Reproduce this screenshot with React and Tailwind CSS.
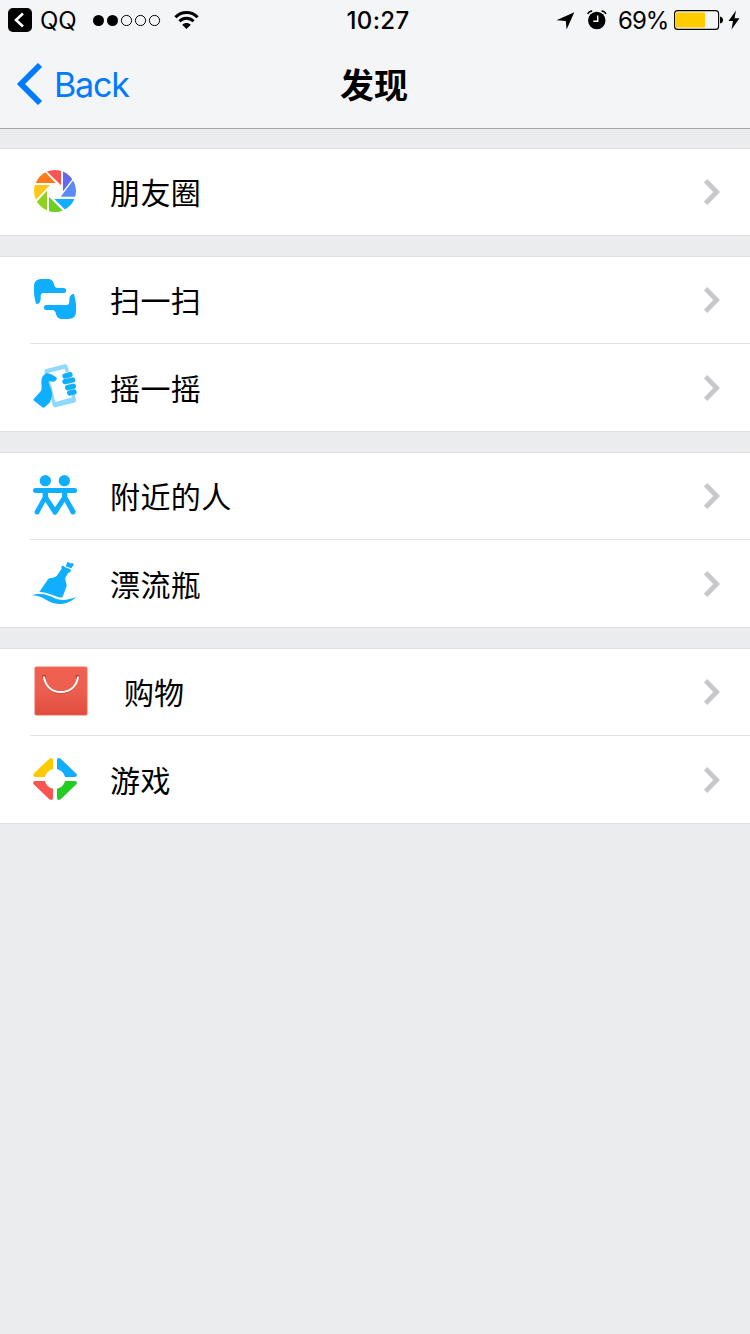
import React from 'react';

const MomentsIcon = () => (
  <svg viewBox="0 0 210 192" className="w-[70px] h-16">
    <defs>
      <clipPath id="aperture">
        <circle cx="105" cy="93" r="63" />
      </clipPath>
    </defs>
    <g clipPath="url(#aperture)">
      <path d="M30 69 L76 26 L76 37 L107 69 Z" fill="#ff7a1a" />
      <path d="M74 28 L123 28 L123 76 Z" fill="#fa5452" />
      <path d="M129 26 L166 46 L129 94 Z" fill="#6467f0" />
      <path d="M162 58 L175 110 L122 110 Z" fill="#5b8af5" />
      <path d="M103 117 L180 117 L136 150 Z" fill="#10aeff" />
      <path d="M87 110 L136 160 L87 160 Z" fill="#6cd020" />
      <path d="M81 92 L81 155 L60 150 L46 130 Z" fill="#8fd320" />
      <path d="M35 75 L90 75 L45 122 L35 120 Z" fill="#ffc71a" />
    </g>
  </svg>
);

const ScanIcon = () => (
  <svg viewBox="0 0 210 192" className="w-[70px] h-16" fill="#10aeff">
    <path
      id="hand"
      d="M42 56 C42 40 50 33 66 33 H82 C94 33 100 39 102 48 C104 57 107 60 114 60 H131 A7.5 7.5 0 0 1 131 75 H70 C64 75 62 79 62 86 V93 C62 102 57 108 48 108 C45 94 42 84 42 72 Z"
    />
    <use href="#hand" transform="rotate(180 105 93)" />
  </svg>
);

const ShakeIcon = () => (
  <svg viewBox="0 6 210 192" className="w-[70px] h-16">
    <path
      d="M79 45 L134 31 Q141 30 143 37 L168 137 Q169 144 162 146 L107 160 Q100 161 98 154 L73 54 Q72 47 79 45 Z"
      fill="#8fd8ff"
    />
    <path d="M84 57 L134 44 L156 130 L106 144 Z" fill="#fff" />
    <path
      d="M41 135 L62 112 C67 105 64 94 64 83 C64 70 70 62 80 58 C92 57 100 65 109 70 C112 74 110 79 104 82 C97 85 91 80 86 82 C84 88 91 98 95 112 C98 122 94 134 90 145 L74 160 Q70 163 66 159 L42 140 Q39 138 41 135 Z"
      fill="#10aeff"
    />
    <g stroke="#fff" strokeWidth="20" strokeLinecap="round">
      <path d="M136 65 L150 62" />
      <path d="M135 82 L157 78" />
      <path d="M144 100 L159 97" />
    </g>
    <g stroke="#10aeff" strokeWidth="16" strokeLinecap="round">
      <path d="M135 66 L150 62" />
      <path d="M135 83 L158 78" />
      <path d="M143 101 L160 97" />
      <path d="M149 117 L162 114" />
    </g>
  </svg>
);

const NearbyIcon = () => (
  <svg viewBox="0 0 210 192" className="w-[70px] h-16" fill="#10aeff">
    <circle cx="76" cy="50" r="17" />
    <circle cx="133" cy="50" r="17" />
    <rect x="39" y="72" width="132" height="15" rx="7" />
    <path d="M68 80 H84 V98 L105 130 L126 98 V80 H142 V98 L167 142 Q168 148 162 151 Q157 153 153 149 L134 113 L111 149 Q105 156 99 149 L76 113 L57 149 Q53 153 48 151 Q42 148 44 142 L68 98 Z" />
  </svg>
);

const BottleIcon = () => (
  <svg viewBox="0 6 210 192" className="w-[70px] h-16" fill="#10aeff">
    <path d="M141 39 Q142 35 145 37 L151 40 L159 40 Q163 42 160 46 L154 55 L137 49 Z" />
    <path d="M126 48 Q130 46 134 51 L151 58 Q155 62 150 67 L145 68 L136 83 C134 92 141 99 140 108 L128 140 Q125 144 118 142 C99 137 85 127 58 126 L84 88 C89 82 101 86 110 78 L125 56 Q122 51 126 48 Z" />
    <path d="M34 136 C64 128 83 134 104 145 C125 153 144 150 169 141 C150 159 126 166 102 160 C79 155 67 136 34 136 Z" />
  </svg>
);

const ShoppingIcon = () => (
  <svg viewBox="0 0 210 216" className="w-[70px] h-[72px]">
    <defs>
      <linearGradient id="bag" x1="0" y1="0" x2="0" y2="1">
        <stop offset="0" stopColor="#f0604f" />
        <stop offset="0.5" stopColor="#ec5f50" />
        <stop offset="1" stopColor="#e04c3c" />
      </linearGradient>
    </defs>
    <rect x="44" y="32" width="158" height="146" rx="5" fill="url(#bag)" stroke="#f5a097" strokeWidth="2" />
    <circle cx="72" cy="62" r="6" fill="#ad4035" />
    <circle cx="173" cy="62" r="6" fill="#ad4035" />
    <path d="M73 68 C78 98 99 112 122 112 C147 112 168 98 173 68" fill="none" stroke="#d4503f" strokeWidth="6" />
    <path d="M72 64 C77 94 99 108 122 108 C147 108 169 94 174 64" fill="none" stroke="#fff" strokeWidth="6" strokeLinecap="round" />
  </svg>
);

const GamesIcon = () => (
  <svg viewBox="0 0 210 192" className="w-[70px] h-16">
    <path d="M99 36 V64 C87 66 78 75 75 87 H45 Q36 84 41 77 L88 32 Q98 27 99 36 Z" fill="#ffc900" />
    <path d="M111 36 V64 C123 66 132 75 135 87 H165 Q174 84 169 77 L122 32 Q112 27 111 36 Z" fill="#10aeff" />
    <path d="M99 150 V122 C87 120 78 111 75 99 H45 Q36 102 41 109 L88 154 Q98 159 99 150 Z" fill="#fa5452" />
    <path d="M111 150 V122 C123 120 132 111 135 99 H165 Q174 102 169 109 L122 154 Q112 159 111 150 Z" fill="#22cc22" />
  </svg>
);

const groups = [
  [{ label: '朋友圈', icon: MomentsIcon }],
  [
    { label: '扫一扫', icon: ScanIcon },
    { label: '摇一摇', icon: ShakeIcon },
  ],
  [
    { label: '附近的人', icon: NearbyIcon },
    { label: '漂流瓶', icon: BottleIcon },
  ],
  [
    { label: '购物', icon: ShoppingIcon, wide: true },
    { label: '游戏', icon: GamesIcon },
  ],
];

const StatusBar = () => (
  <div className="grid grid-cols-[346px_64px_1fr] h-10 items-center text-black leading-none">
    <div className="flex items-center pl-2">
      <svg viewBox="0 0 24 24" className="w-6 h-6">
        <rect width="24" height="24" rx="5" />
        <path d="M15 5.5 L8 12 L15 18.5" fill="none" stroke="#fff" strokeWidth="2.6" />
      </svg>
      <span className="ml-2 w-[52px] pt-px text-[24px] tracking-[-0.2px]">QQ</span>
      <svg viewBox="0 0 70 12" className="w-[70px] h-3">
        <circle cx="6.5" cy="6.5" r="5.5" />
        <circle cx="20.5" cy="6.5" r="5.5" />
        {[34.5, 48.5, 62.5].map((cx) => (
          <circle key={cx} cx={cx} cy="6.5" r="5.1" fill="none" stroke="#000" />
        ))}
      </svg>
      <svg viewBox="0 0 25 20" className="ml-[12px] w-[25px] h-5" fill="none" stroke="#000" strokeWidth="3">
        <path d="M1.4 7.2 C7.5 0.8 17.5 0.8 23.6 7.2" />
        <path d="M5.4 11.2 C9.5 7.2 15.5 7.2 19.6 11.2" />
        <path d="M8.2 14.7 C10.8 12.3 14.2 12.3 16.8 14.7 L12.5 19 Z" fill="#000" stroke="none" />
      </svg>
    </div>
    <div className="flex justify-center pt-0.5 text-[24px] font-medium tracking-[0.4px] whitespace-nowrap">10:27</div>
    <div className="flex items-center pl-[146px]">
      <svg viewBox="0 0 19 19" className="w-[19px] h-[19px]">
        <path d="M18.3 1.2 L10.6 18.6 L9.8 9.9 L0.5 9.2 Z" />
      </svg>
      <svg viewBox="0 0 20 20" className="ml-3 w-5 h-5">
        <circle cx="9.8" cy="10.5" r="8.7" />
        <path d="M0.7 4 Q2 1.3 5.2 1 M14.5 1 Q17.7 1.3 19 4" fill="none" stroke="#000" strokeWidth="1.4" />
        <path d="M10.7 5.5 V11.3 H6.3" fill="none" stroke="#fff" strokeWidth="1.5" />
      </svg>
      <span className="ml-[11px] w-14 pt-0.5 text-[24px] tracking-[-1px]">69%</span>
      <svg viewBox="0 0 50 20" className="w-[50px] h-5">
        <rect x="0.6" y="0.6" width="44" height="18.8" rx="3" fill="none" stroke="#000" strokeWidth="1.1" />
        <rect x="2" y="2.5" width="29" height="15" rx="1" fill="#ffcc00" />
        <path d="M46 6.5 Q49 7 49 10 Q49 13 46 13.5 Z" />
      </svg>
      <svg viewBox="0 0 12 20" className="ml-1 w-3 h-5">
        <path d="M8 0.5 L0.5 11 H5 L3.5 19.5 L11.5 8.3 H6.5 Z" />
      </svg>
    </div>
  </div>
);

const NavBar = () => (
  <div className="grid grid-cols-[1fr_68px_1fr] h-[88px] items-center">
    <div className="flex items-center gap-[11px] pl-4 text-[#007aff]">
      <svg viewBox="0 0 27 42" className="w-[27px] h-[42px]" fill="none" stroke="currentColor" strokeWidth="5.8">
        <path d="M24 2 L5 21 L24 40" />
      </svg>
      <span className="pt-0.5 text-[34px] leading-none tracking-[-1.2px]">Back</span>
    </div>
    <h1 className="-ml-0.5 pt-[3px] text-[34px] leading-none font-bold text-center whitespace-nowrap">发现</h1>
  </div>
);

const Row = ({ item }) => {
  const Icon = item.icon;
  return (
    <div className="flex items-center h-[86px] pl-5 pr-[30px]">
      <Icon />
      <span className={item.wide ? 'ml-[34px] pt-0.5 text-[30px]' : 'ml-5 pt-0.5 text-[30px] tracking-[0.4px]'}>
        {item.label}
      </span>
      <svg viewBox="0 0 16 26" className="ml-auto w-4 h-[26px]" fill="none" stroke="#c7c7cc" strokeWidth="4.8">
        <path d="M1.7 1.7 L12.7 13 L1.7 24.3" />
      </svg>
    </div>
  );
};

export default function App() {
  return (
    <div className="w-[750px] h-[1334px] overflow-hidden bg-[#ebecee] text-black font-[Inter,'Noto_Sans_CJK_SC',sans-serif]">
      <header className="h-[129px] bg-[#f4f5f6] border-b border-[#a7a7aa]">
        <StatusBar />
        <NavBar />
      </header>
      <main className="flex flex-col gap-5 pt-[19px]">
        {groups.map((items) => (
          <section key={items[0].label} className="bg-white border-y border-[#dfdfe1]">
            {items.map((item, idx) => (
              <React.Fragment key={item.label}>
                {idx > 0 && <div className="h-px ml-[30px] mb-px bg-[#e2e2e4]" />}
                <Row item={item} />
              </React.Fragment>
            ))}
          </section>
        ))}
      </main>
    </div>
  );
}
